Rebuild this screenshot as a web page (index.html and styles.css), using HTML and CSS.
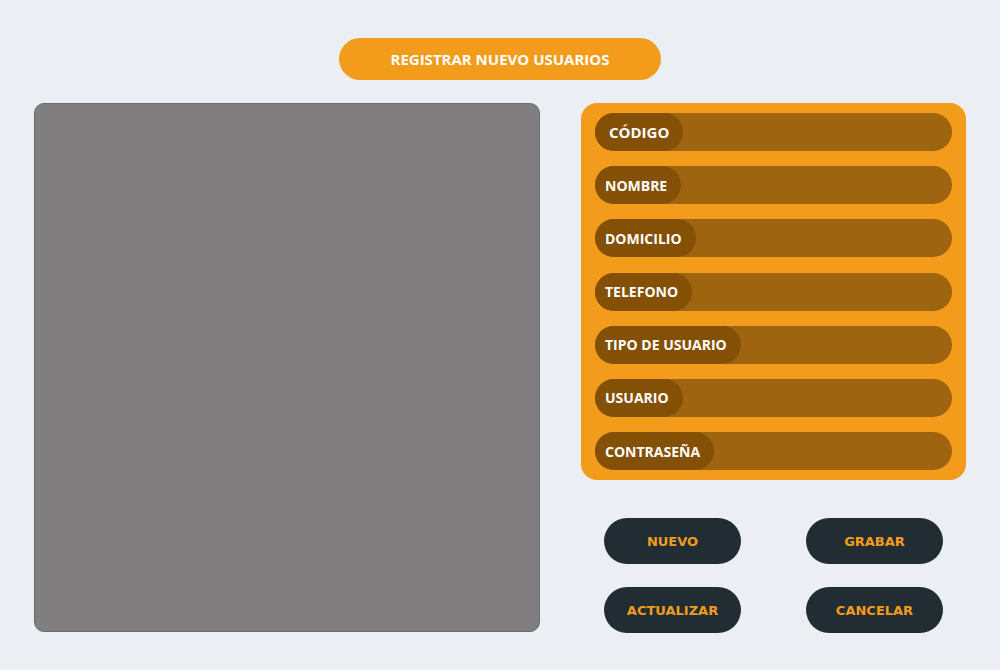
FILE: index.html
```html
<!DOCTYPE html>
<html lang="es">
<head>
<meta charset="utf-8">
<title>Registrar nuevo usuarios</title>
<link rel="stylesheet" href="styles.css">
</head>
<body>
<div class="page">
  <header class="title-wrap">
    <div class="title">REGISTRAR NUEVO USUARIOS</div>
  </header>
  <main class="main">
    <section class="preview"></section>
    <section class="side">
      <div class="form">
        <div class="field"><span class="label big">CÓDIGO</span></div>
        <div class="field"><span class="label">NOMBRE</span></div>
        <div class="field"><span class="label">DOMICILIO</span></div>
        <div class="field"><span class="label">TELEFONO</span></div>
        <div class="field"><span class="label">TIPO DE USUARIO</span></div>
        <div class="field"><span class="label">USUARIO</span></div>
        <div class="field"><span class="label">CONTRASEÑA</span></div>
      </div>
      <div class="actions">
        <button class="btn">NUEVO</button>
        <button class="btn">GRABAR</button>
        <button class="btn">ACTUALIZAR</button>
        <button class="btn">CANCELAR</button>
      </div>
    </section>
  </main>
</div>
</body>
</html>
```
FILE: styles.css
```css
html, body {
  margin: 0;
  padding: 0;
  background: #ebeff4;
  font-family: "Open Sans", "Liberation Sans", sans-serif;
}
.page {
  width: 1000px;
  height: 670px;
  box-sizing: border-box;
  padding-top: 38px;
}
.title-wrap {
  display: flex;
  justify-content: center;
}
.title {
  width: 322px;
  height: 42px;
  border-radius: 21px;
  background: #f39c1c;
  color: #fff;
  font-weight: 700;
  font-size: 15px;
  display: flex;
  align-items: center;
  justify-content: center;
}
.main {
  display: flex;
  margin-top: 23px;
  padding-left: 34px;
  gap: 41px;
}
.preview {
  width: 506px;
  height: 529px;
  box-sizing: border-box;
  background: #807e7f;
  border: 1px solid #6c6b6c;
  border-radius: 10px;
}
.side {
  width: 385px;
  display: flex;
  flex-direction: column;
}
.form {
  background: #f39c1c;
  border-radius: 16px;
  height: 377px;
  box-sizing: border-box;
  padding: 10px 14px 0;
  display: flex;
  flex-direction: column;
  gap: 15.2px;
}
.field {
  height: 38px;
  border-radius: 19px;
  background: #9e640f;
  display: flex;
}
.label {
  background: #845006;
  border-radius: 19px;
  color: #fff;
  font-weight: 700;
  font-size: 14px;
  display: flex;
  align-items: center;
  padding: 0 14px 0 10px;
}
.label.big {
  font-size: 15px;
  padding: 0 14px 0 14px;
}
.actions {
  margin-top: 38px;
  padding: 0 23px;
  display: grid;
  grid-template-columns: 137px 137px;
  justify-content: space-between;
  row-gap: 23px;
}
.btn {
  height: 46px;
  border: none;
  border-radius: 23px;
  background: #222d33;
  color: #f39c1c;
  font-family: "DejaVu Sans", "Liberation Sans", sans-serif;
  font-weight: 700;
  font-size: 13px;
  padding: 0;
}
```
